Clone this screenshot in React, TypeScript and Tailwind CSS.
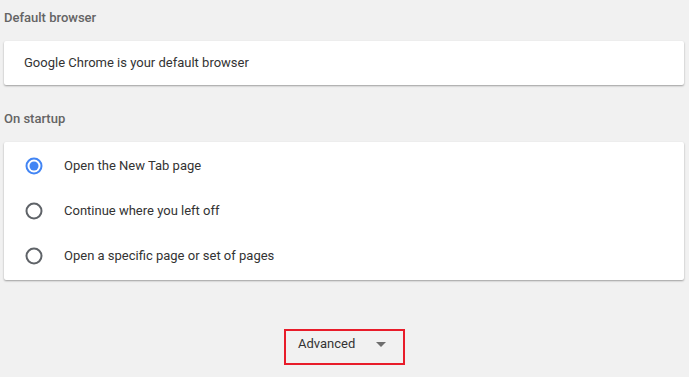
import React from "react";

const options = [
  "Open the New Tab page",
  "Continue where you left off",
  "Open a specific page or set of pages",
];

function Radio({ checked }: { checked: boolean }) {
  return (
    <svg width="18" height="18" viewBox="0 0 18 18">
      <circle cx="9" cy="9" r="7.5" fill="none" stroke={checked ? "#4285f4" : "#5f6368"} strokeWidth="2" />
      {checked && <circle cx="9" cy="9" r="4.5" fill="#4285f4" />}
    </svg>
  );
}

export default function App() {
  const selected = 0;
  return (
    <div className="w-[689px] h-[377px] overflow-hidden bg-[#f1f1f1] pl-1 pr-[5px] font-['Roboto',sans-serif] text-[13px] text-[#333]">
      <h2 className="pt-[10px] h-[41px] font-medium text-[13px] text-[#646464] leading-[15px]">
        Default browser
      </h2>
      <div className="bg-white rounded-[2px] h-[44px] flex items-center pl-5 shadow-[0_1px_2px_rgba(0,0,0,0.35)]">
        Google Chrome is your default browser
      </div>
      <h2 className="pt-[26px] h-[57px] font-medium text-[13px] text-[#646464] leading-[15px]">
        On startup
      </h2>
      <div className="bg-white rounded-[2px] h-[138px] flex flex-col py-[1px] shadow-[0_1px_2px_rgba(0,0,0,0.35)]">
        {options.map((label, i) => (
          <div key={label} className="h-[45px] flex items-center pl-[21px] gap-[21px]">
            <Radio checked={i === selected} />
            <span>{label}</span>
          </div>
        ))}
      </div>
      <div className="flex justify-center pt-[49px] pl-[1px]">
        <div className="w-[121px] h-[36px] border-2 border-[#e81c2a] flex items-center pl-[12px] pb-[6px] gap-[21px]">
          <span className="text-[#333]">Advanced</span>
          <svg width="10" height="5" viewBox="0 0 10 5">
            <path d="M0 0 L10 0 L5 5 Z" fill="#6e6e6e" />
          </svg>
        </div>
      </div>
    </div>
  );
}
